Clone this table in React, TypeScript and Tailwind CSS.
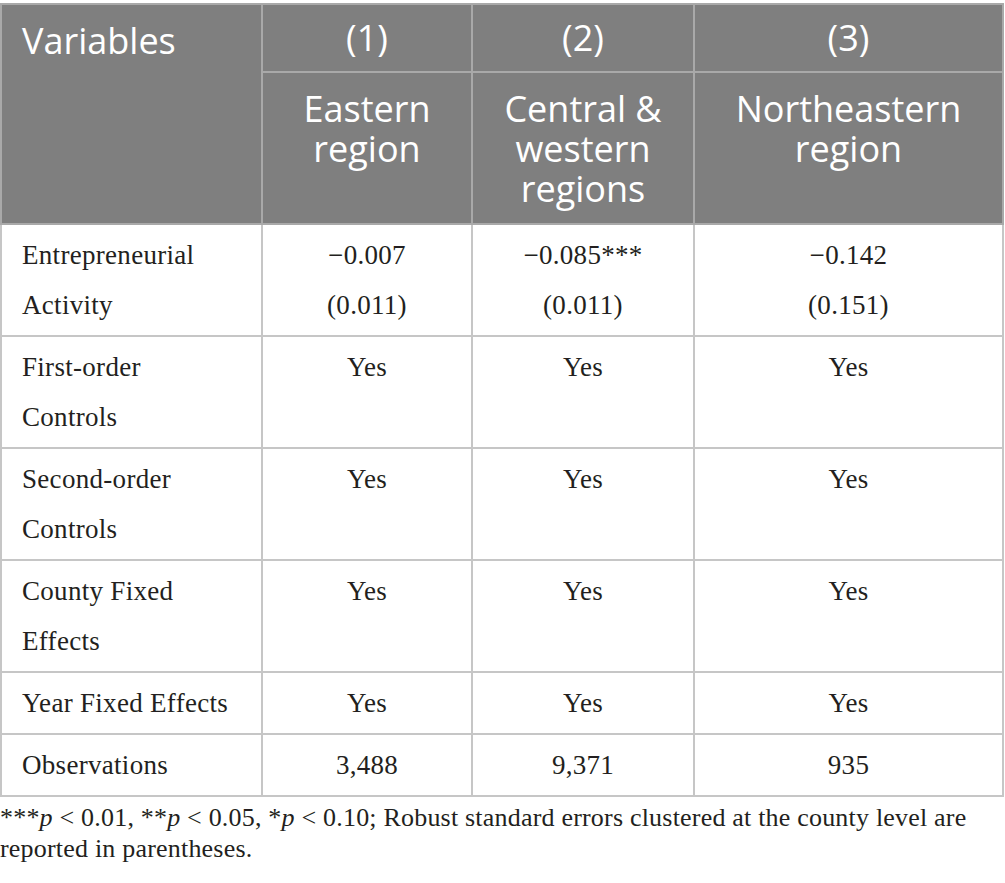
const rows: { label: string[]; cells: string[][] }[] = [
  { label: ["Entrepreneurial", "Activity"], cells: [["−0.007", "(0.011)"], ["−0.085***", "(0.011)"], ["−0.142", "(0.151)"]] },
  { label: ["First-order", "Controls"], cells: [["Yes"], ["Yes"], ["Yes"]] },
  { label: ["Second-order", "Controls"], cells: [["Yes"], ["Yes"], ["Yes"]] },
  { label: ["County Fixed", "Effects"], cells: [["Yes"], ["Yes"], ["Yes"]] },
  { label: ["Year Fixed Effects"], cells: [["Yes"], ["Yes"], ["Yes"]] },
  { label: ["Observations"], cells: [["3,488"], ["9,371"], ["935"]] },
];

export default function App() {
  return (
    <div className="bg-white min-h-screen pt-[3px]">
      <table className="w-[1002px] border-collapse table-fixed">
        <colgroup>
          <col className="w-[261px]" />
          <col className="w-[210px]" />
          <col className="w-[222px]" />
          <col className="w-[309px]" />
        </colgroup>
        <thead className="bg-[#7f7f7f] text-white font-['Open_Sans',sans-serif] text-[36px] leading-[40px]">
          <tr>
            <th rowSpan={2} className="border-2 border-[#a9a9a9] align-top text-left font-normal px-[20px] pt-[16px]">
              Variables
            </th>
            <th className="border-2 border-[#a9a9a9] font-normal h-[68px] py-[12px]">(1)</th>
            <th className="border-2 border-[#a9a9a9] font-normal py-[12px]">(2)</th>
            <th className="border-2 border-[#a9a9a9] font-normal py-[12px]">(3)</th>
          </tr>
          <tr>
            <th className="border-2 border-[#a9a9a9] font-normal align-top pt-[16px] px-2 h-[152px]">
              Eastern
              <br />
              region
            </th>
            <th className="border-2 border-[#a9a9a9] font-normal align-top pt-[16px] px-2">
              Central &amp;
              <br />
              western
              <br />
              regions
            </th>
            <th className="border-2 border-[#a9a9a9] font-normal align-top pt-[16px] px-2">
              Northeastern
              <br />
              region
            </th>
          </tr>
        </thead>
        <tbody className="font-['Liberation_Serif',serif] text-[27px] leading-[50px] tracking-[0.3px] text-[#231f20]">
          {rows.map((r) => (
            <tr key={r.label.join(" ")}>
              <td className="border-2 border-[#c6c6c6] align-top px-[20px] py-[5px]">
                {r.label.map((l) => (
                  <div key={l}>{l}</div>
                ))}
              </td>
              {r.cells.map((c, i) => (
                <td key={i} className="border-2 border-[#c6c6c6] align-top text-center py-[5px]">
                  {c.map((l) => (
                    <div key={l}>{l}</div>
                  ))}
                </td>
              ))}
            </tr>
          ))}
        </tbody>
      </table>
      <p className="font-['Liberation_Serif',serif] text-[26px] leading-[31px] tracking-[0.2px] text-[#231f20] mt-[5px] w-[975px]">
        ***<i>p</i> &lt; 0.01, **<i>p</i> &lt; 0.05, *<i>p</i> &lt; 0.10; Robust standard errors clustered at the county level are reported in parentheses.
      </p>
    </div>
  );
}
